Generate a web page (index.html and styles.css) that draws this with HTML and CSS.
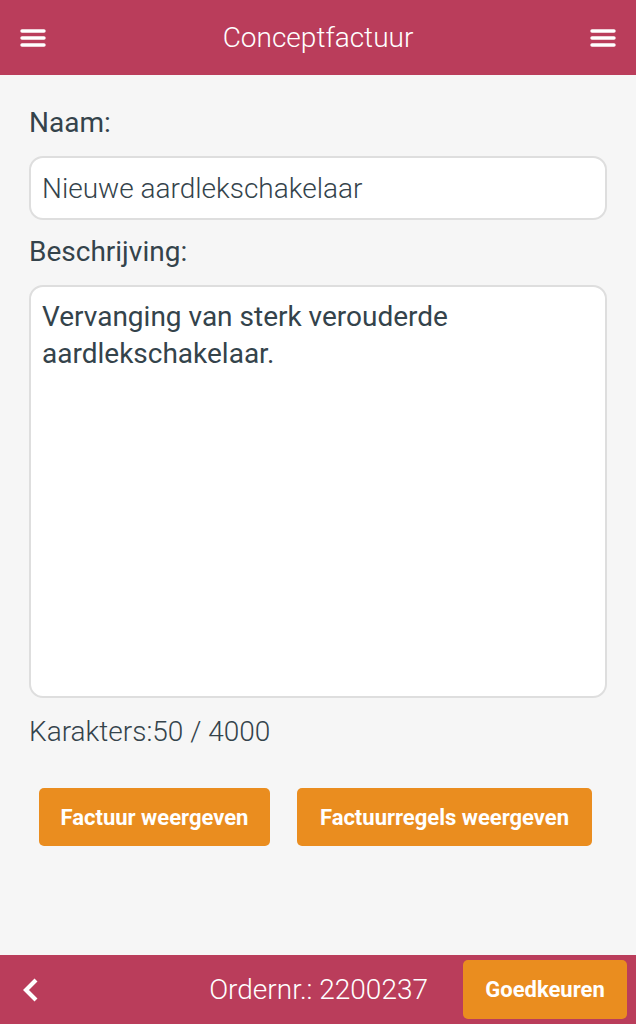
FILE: index.html
```html
<!DOCTYPE html>
<html lang="nl">
<head>
    <meta charset="UTF-8">
    <meta name="viewport" content="width=device-width, initial-scale=1.0">
    <title>Conceptfactuur</title>
    <link rel="stylesheet" href="styles.css">
</head>
<body>
    <header class="topbar">
        <button class="icon-btn" aria-label="Menu">
            <svg width="26" height="20" viewBox="0 0 26 20"><g stroke="#fff" stroke-width="3.4" stroke-linecap="round"><line x1="2" y1="3" x2="24" y2="3"/><line x1="2" y1="10" x2="24" y2="10"/><line x1="2" y1="17" x2="24" y2="17"/></g></svg>
        </button>
        <h1 class="title">Conceptfactuur</h1>
        <button class="icon-btn" aria-label="Opties">
            <svg width="26" height="20" viewBox="0 0 26 20"><g stroke="#fff" stroke-width="3.4" stroke-linecap="round"><line x1="2" y1="3" x2="24" y2="3"/><line x1="2" y1="10" x2="24" y2="10"/><line x1="2" y1="17" x2="24" y2="17"/></g></svg>
        </button>
    </header>

    <main class="content">
        <div class="form-group">
            <label for="naam">Naam:</label>
            <input type="text" id="naam" class="field" value="Nieuwe aardlekschakelaar">
        </div>
        <div class="form-group">
            <label for="beschrijving">Beschrijving:</label>
            <textarea id="beschrijving" class="field area">Vervanging van sterk verouderde aardlekschakelaar.</textarea>
        </div>
        <div class="counter">Karakters:50 / 4000</div>
        <div class="actions">
            <button class="btn btn-small">Factuur weergeven</button>
            <button class="btn btn-wide">Factuurregels weergeven</button>
        </div>
    </main>

    <footer class="bottombar">
        <button class="icon-btn back" aria-label="Terug">
            <svg width="18" height="26" viewBox="0 0 18 26"><polyline points="14,3 4,13 14,23" fill="none" stroke="#fff" stroke-width="4.2"/></svg>
        </button>
        <span class="order">Ordernr.: 2200237</span>
        <button class="btn approve">Goedkeuren</button>
    </footer>
</body>
</html>
```

FILE: styles.css
```css
* {
    box-sizing: border-box;
}
html, body {
    height: 100%;
}
body {
    margin: 0;
    font-family: Roboto, 'Noto Sans', sans-serif;
    background: #f6f6f6;
    color: #34434b;
    display: flex;
    flex-direction: column;
}
.topbar {
    height: 75px;
    background: #ba3d5b;
    display: flex;
    align-items: center;
    justify-content: space-between;
    padding: 0 20px 0 20px;
    flex-shrink: 0;
}
.title {
    margin: 0;
    font-size: 28px;
    font-weight: 300;
    color: #fff;
}
.icon-btn {
    background: none;
    border: 0;
    padding: 0;
    display: flex;
    cursor: pointer;
}
.content {
    flex: 1;
    padding: 43px 29px 0 29px;
}
.form-group {
    margin-bottom: 27px;

    label {
        display: block;
        font-size: 28px;
        line-height: 30px;
        margin: -10px 0 18px;
    }
}
.field {
    display: block;
    width: 100%;
    border: 2px solid #dedede;
    border-radius: 14px;
    background: #fff;
    font-family: Roboto, sans-serif;
    font-size: 28px;
    font-weight: 300;
    color: #34434b;
    padding: 0 11px;
    height: 64px;
    outline: none;
}
.area {
    height: 413px;
    padding: 11px 11px;
    font-weight: 400;
    line-height: 37px;
    resize: none;
}
.counter {
    font-size: 28px;
    font-weight: 300;
    margin-top: -10px;
}
.actions {
    display: flex;
    gap: 27px;
    padding: 40px 0 0 10px;
}
.btn {
    background: #ea8d1f;
    color: #fff;
    border: 0;
    border-radius: 5px;
    font-family: Roboto, sans-serif;
    font-weight: 700;
    font-size: 22px;
    height: 58px;
    padding: 0;
    cursor: pointer;
}
.btn-small {
    width: 231px;
}
.btn-wide {
    width: 295px;
}
.bottombar {
    height: 69px;
    background: #ba3d5b;
    display: flex;
    align-items: center;
    padding: 0 9px 0 22px;
    flex-shrink: 0;
}
.order {
    flex: 1;
    text-align: right;
    color: #fff;
    font-size: 28px;
    font-weight: 300;
    padding-right: 35px;
}
.approve {
    width: 164px;
    height: 59px;
}
```
